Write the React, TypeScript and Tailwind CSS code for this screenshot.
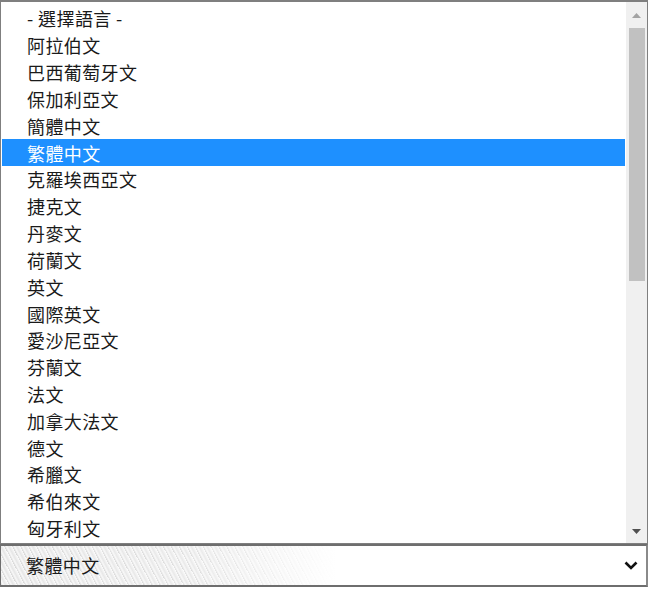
import React from "react";

const items = [
  "- 選擇語言 -",
  "阿拉伯文",
  "巴西葡萄牙文",
  "保加利亞文",
  "簡體中文",
  "繁體中文",
  "克羅埃西亞文",
  "捷克文",
  "丹麥文",
  "荷蘭文",
  "英文",
  "國際英文",
  "愛沙尼亞文",
  "芬蘭文",
  "法文",
  "加拿大法文",
  "德文",
  "希臘文",
  "希伯來文",
  "匈牙利文",
];

export default function App() {
  return (
    <div
      className="w-[650px] h-[589px] bg-white flex flex-col text-[18px] tracking-[0.4px] text-[#1a1a1a]"
      style={{ fontFamily: '"Noto Sans CJK TC", "Noto Sans", sans-serif' }}
    >
      <div className="h-[544px] w-[648px] border border-[#7f7f7f] border-t-2 flex shrink-0">
        <div className="flex-1 pt-[3px] overflow-hidden">
          {items.map((t, i) => (
            <div
              key={t}
              className={
                "h-[26.84px] flex items-center pl-[25px] leading-none " +
                (i === 5 ? "bg-[#1e90ff] text-white ml-[1px] mr-[1px]" : "ml-[1px] mr-[1px]")
              }
            >
              {t}
            </div>
          ))}
        </div>
        <div className="w-[21px] bg-[#f0f0f0] flex flex-col items-center">
          <div className="h-[26px] w-full flex items-center justify-center">
            <svg width="9" height="5" viewBox="0 0 9 5">
              <polygon points="0,5 9,5 4.5,0" fill="#a3a3a3" />
            </svg>
          </div>
          <div className="w-[16px] h-[253px] bg-[#c1c1c1]" />
          <div className="flex-1" />
          <div className="h-[24px] w-full flex items-center justify-center">
            <svg width="9" height="5" viewBox="0 0 9 5">
              <polygon points="0,0 9,0 4.5,5" fill="#505050" />
            </svg>
          </div>
        </div>
      </div>
      <div className="h-[43px] w-[648px] border-2 border-[#6e6e6e] border-l border-r-[#8a8a8a] flex items-center pl-[25px] pr-[8px] bg-[linear-gradient(to_right,rgba(255,255,255,0)_0%,rgba(255,255,255,0.15)_30%,#ffffff_52%),repeating-linear-gradient(62deg,#d6d6d6_0px,#f8f8f8_2px,#e6e6e6_4px,#fbfbfb_7px)]">
        <span className="flex-1">繁體中文</span>
        <svg width="14" height="9" viewBox="0 0 14 9">
          <polyline
            points="1.5,1.5 7,7 12.5,1.5"
            fill="none"
            stroke="#111"
            strokeWidth="2.6"
          />
        </svg>
      </div>
    </div>
  );
}
